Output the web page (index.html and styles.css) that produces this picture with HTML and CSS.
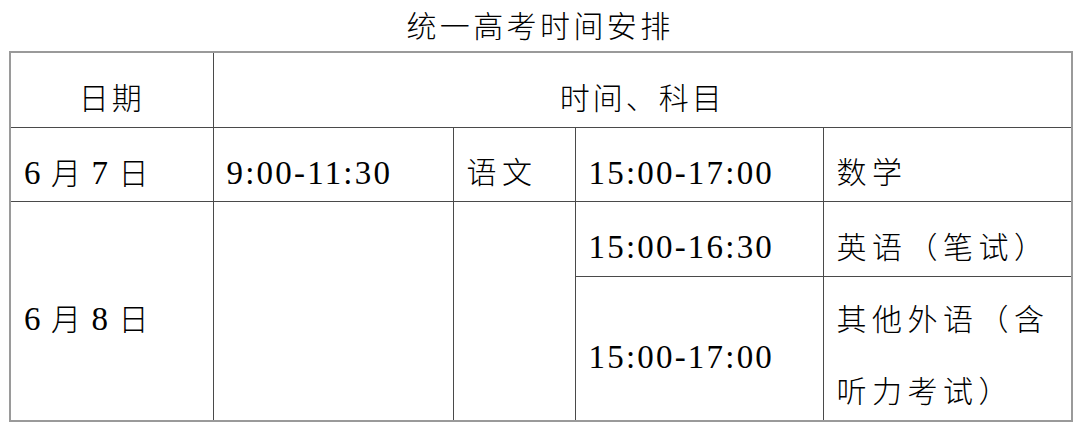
FILE: index.html
```html
<!DOCTYPE html>
<html lang="zh-CN">
<head>
<meta charset="utf-8">
<title>统一高考时间安排</title>
<link rel="stylesheet" href="styles.css">
</head>
<body>
<h1 class="title">统一高考时间安排</h1>
<table class="schedule">
  <colgroup>
    <col class="c-date">
    <col class="c-time1">
    <col class="c-subj1">
    <col class="c-time2">
    <col class="c-subj2">
  </colgroup>
  <tr class="r-head">
    <td class="center">日期</td>
    <td class="center" colspan="4">时间、科目</td>
  </tr>
  <tr class="r-day1">
    <td class="date"><span class="num">6</span> 月 <span class="num">7</span> 日</td>
    <td class="dash-r"><span class="num">9:00-11:30</span></td>
    <td>语文</td>
    <td class="dash-r"><span class="num">15:00-17:00</span></td>
    <td>数学</td>
  </tr>
  <tr class="r-day2a">
    <td class="date" rowspan="2"><span class="num">6</span> 月 <span class="num">8</span> 日</td>
    <td class="dash-r" rowspan="2"></td>
    <td rowspan="2"></td>
    <td class="dash-r"><span class="num">15:00-16:30</span></td>
    <td>英语（笔试）</td>
  </tr>
  <tr class="r-day2b">
    <td class="dash-r"><span class="num">15:00-17:00</span></td>
    <td class="multi"><div class="two-line">其他外语（含<br>听力考试）</div></td>
  </tr>
</table>
</body>
</html>
```

FILE: styles.css
```css
html, body {
  margin: 0;
  padding: 0;
  background: #ffffff;
}

body {
  font-family: "Liberation Serif", "Noto Sans CJK SC", serif;
  font-weight: 300;
  color: #000000;
  width: 1080px;
  height: 428px;
  overflow: hidden;
}

.title {
  margin: 0;
  height: 51px;
  line-height: 54px;
  font-size: 30px;
  font-weight: 300;
  letter-spacing: 3.4px;
  text-align: center;
}

.schedule {
  margin-left: 9px;
  width: 1062px;
  border-collapse: collapse;
  table-layout: fixed;
  font-size: 30px;
  letter-spacing: 5.5px;
}

.c-date { width: 203px; }
.c-time1 { width: 240px; }
.c-subj1 { width: 122px; }
.c-time2 { width: 248px; }
.c-subj2 { width: 249px; }

.schedule td {
  border: 1px solid #4a4a4a;
  padding: 18px 0 0 13px;
  vertical-align: middle;
  white-space: nowrap;
  line-height: 36px;
}

.schedule td.center {
  text-align: center;
  padding-left: 0;
  letter-spacing: 3px;
}

.schedule td.date {
  letter-spacing: 1.5px;
}

.num {
  font-size: 33px;
  letter-spacing: 2.2px;
}

.date .num {
  letter-spacing: 1.5px;
}

.schedule td.dash-r {
  border-right: 1px dashed #d6d6d6;
}

.schedule tr > td:first-child {
  border-left: 2px solid #9a9a9a;
}

.schedule tr > td:last-child {
  border-right: 2px solid #9a9a9a;
}

.schedule tr.r-day2a > td:first-child {
  border-right: 1px solid #4a4a4a;
}

.schedule tr.r-day2a > td:nth-child(2) {
  border-left: 1px solid #4a4a4a;
  border-right: 1px dashed #d6d6d6;
}

.schedule tr.r-day2b > td:first-child {
  border-left: 1px solid #4a4a4a;
}

.schedule tr.r-head > td {
  border-top: 2px solid #9a9a9a;
}

.schedule tr.r-day2b > td,
.schedule tr.r-day2a > td[rowspan] {
  border-bottom: 2px solid #9a9a9a;
}

.r-head { height: 75px; }
.r-day1 { height: 74px; }
.r-day2a { height: 75px; }
.r-day2b { height: 144px; }

.schedule td.multi {
  padding: 0 0 0 13px;
  vertical-align: top;
}

.two-line {
  height: 136px;
  padding-top: 7px;
  line-height: 72px;
  white-space: nowrap;
}
```
